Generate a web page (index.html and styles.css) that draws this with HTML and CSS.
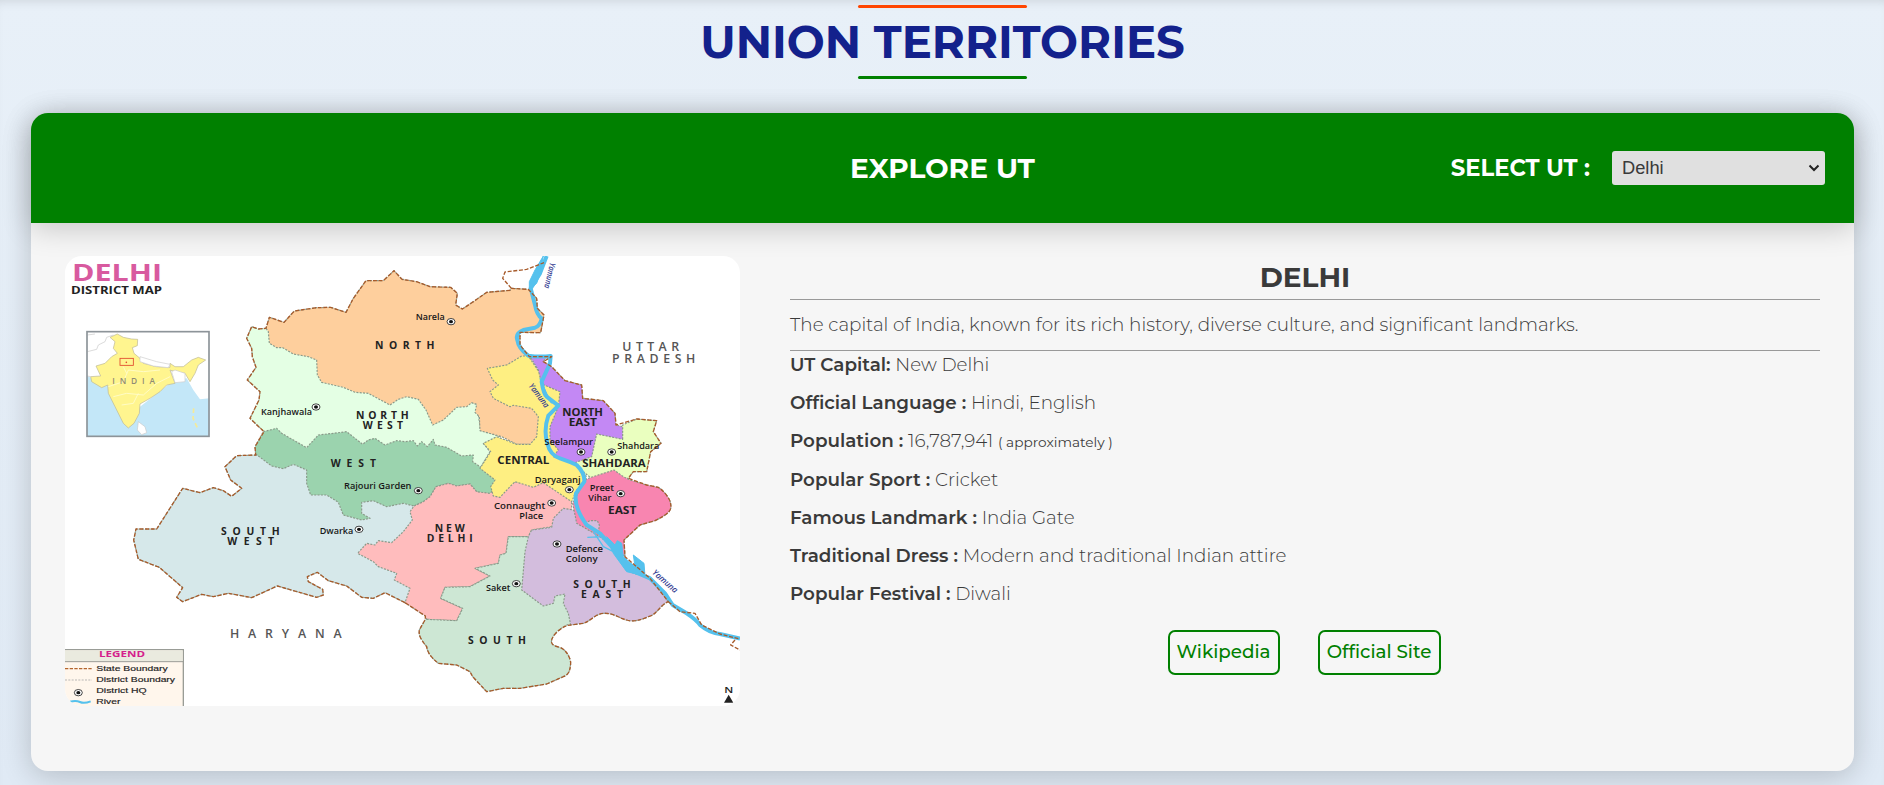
FILE: index.html
```
<!DOCTYPE html>
<html lang="en">
<head>
<meta charset="utf-8">
<title>Union Territories</title>
<link rel="stylesheet" href="styles.css">
</head>
<body>
<main class="page">
  <h1 class="title"><span class="title-text">UNION TERRITORIES</span></h1>
  <section class="card">
    <header class="card-head">
      <h2 class="explore">EXPLORE UT</h2>
      <div class="picker">
        <label class="picker-label" for="ut">SELECT UT :</label>
        <div class="select" id="ut"><span>Delhi</span>
          <svg class="chev" viewBox="0 0 12 8"><path d="M1.500 1.500 6 6l4.500-4.500" fill="none" stroke="#222" stroke-width="2"/></svg>
        </div>
      </div>
    </header>
    <div class="card-body">
      <svg class="map" viewBox="15 18 2025 1350" preserveAspectRatio="none">
        <rect x="15" y="18" width="2025" height="1350" fill="#fff"/>
        <!-- districts -->
        <g class="district">
          <path fill="#d6e8ea" d="M587 615 530 617 495 650 512 690 545 715 515 739 490 722 460 713 420 728 368 715 290 837 228 837 221 870 235 928 298 952 368 1013 350 1042 368 1055 425 1033 460 1040 505 1030 575 1043 652 1008 770 1042 790 1035 788 1018 745 995 742 980 772 967 805 992 860 1008 905 1042 940 1045 975 1028 1035 1058 1100 1000 1100 740 740 620Z"/>
          <path fill="#e4ffe4" d="M575 230 595 237 618 235 800 300 1250 463 1262 540 1320 560 1270 580 1290 605 1260 655 1000 680 740 620 612 545 570 505 597 450 600 425 562 390 588 352 577 320 575 295 560 265Z"/>
          <path fill="#fecf9d" d="M618 235 628 202 672 217 703 183 770 173 812 172 858 187 880 145 918 92 970 92 1002 62 1026 88 1070 95 1110 110 1172 112 1192 130 1187 165 1207 177 1240 155 1280 127 1350 121 1354 115 1405 118 1430 145 1432 175 1452 195 1442 248 1380 247 1380 285 1408 320 1470 480 1450 560 1420 583 1370 583 1325 560 1260 542 1258 500 1245 487 1250 463 1235 458 1220 470 1190 472 1150 510 1118 525 1098 480 1075 448 1040 440 1015 448 990 465 925 430 885 427 850 412 785 397 772 375 770 330 745 320 700 312 668 293 650 293 628 280 625 245Z"/>
          <path fill="#9bd3ae" d="M610 545 650 535 665 550 740 593 775 555 820 550 860 545 908 583 925 570 945 565 975 585 1010 572 1035 575 1060 572 1072 588 1085 575 1102 590 1120 568 1125 585 1160 592 1205 618 1240 615 1238 635 1275 660 1315 690 1300 740 1250 725 1230 702 1190 708 1165 700 1128 710 1110 740 1090 755 1062 768 1030 760 980 770 940 752 905 757 905 790 930 805 905 810 850 795 835 757 800 735 752 735 740 700 740 660 700 643 670 656 635 648 587 612 585 590Z"/>
          <path fill="#ffbcbd" d="M1062 768 1090 755 1110 740 1128 710 1165 700 1190 708 1230 702 1250 725 1290 730 1320 700 1450 690 1535 750 1535 785 1490 800 1475 830 1415 840 1405 860 1345 860 1338 910 1320 915 1315 940 1245 955 1290 978 1230 1010 1155 1012 1142 1045 1208 1075 1190 1112 1100 1108 1096 1098 1035 1058 1050 1015 1003 990 1010 970 955 950 940 935 893 910 920 880 945 885 955 872 995 878 1030 845 1057 810 1050 785Z"/>
          <path fill="#cde7d4" d="M1100 1108 1190 1112 1208 1075 1142 1045 1155 1012 1230 1010 1290 978 1245 955 1315 940 1320 915 1338 910 1345 860 1412 860 1540 900 1532 1122C1512 1125 1480 1150 1475 1170 1472 1182 1480 1188 1500 1192 1520 1200 1532 1225 1532 1240 1530 1265 1525 1275 1510 1280L1460 1302 1380 1315 1330 1315 1280 1325 1238 1280 1230 1265 1210 1255 1190 1245 1135 1240C1110 1220 1102 1205 1100 1190 1080 1165 1076 1155 1078 1140L1096 1108Z"/>
          <path fill="#d3bddd" d="M1415 840 1475 832 1480 805 1510 775 1540 780 1640 860 1720 970 1770 980 1825 1055C1800 1065 1790 1095 1765 1100 1740 1112 1715 1116 1700 1110 1680 1106 1660 1088 1630 1090 1605 1092 1590 1115 1570 1120L1532 1125 1525 1090 1510 1060 1515 1032 1485 1038 1480 1060 1450 1068 1385 1020 1395 905 1405 860Z"/>
          <path fill="#feef82" d="M1405 318 1385 318 1340 345 1282 355 1298 390 1315 405 1290 425 1300 445 1350 470 1360 466 1415 475 1435 500 1430 560 1410 583 1370 583 1310 560 1270 580 1292 605 1260 655 1305 690 1292 710 1300 738 1320 742 1350 710 1365 695 1420 712 1450 698 1535 755 1550 720 1580 685 1560 630 1500 560 1510 430 1440 370Z"/>
          <path fill="#c388f4" d="M1410 320 1460 320 1450 335 1475 350 1515 392 1565 405 1568 445 1630 452 1665 490 1668 525 1688 530 1690 570 1640 640 1540 640 1480 620 1495 600 1470 570 1470 530 1495 470 1500 425 1445 402 1435 360Z"/>
          <path fill="#eaffbf" d="M1688 568 1688 525 1730 507 1790 512 1780 545 1803 580 1772 605 1760 665 1720 665 1705 685 1600 690 1540 640 1595 620 1610 552 1650 560Z"/>
          <path fill="#f885b0" d="M1575 690 1590 683 1662 660 1690 680 1710 690 1760 705 1795 712C1815 725 1832 750 1832 762 1835 780 1830 790 1785 812L1740 825 1692 870 1695 920 1620 860 1550 820 1538 760Z"/>
          <path fill="#d3bddd" d="M1575 820 1590 812 1612 812 1618 825 1615 850Z"/>
        </g>
        <!-- river -->
        <g class="river">
          <path stroke-width="12" d="M1460 18 1440 70 1412 115 1425 165Q1430 195 1445 205 1440 228 1425 233L1390 240Q1365 250 1372 270 1375 295 1405 317 1440 322 1472 318L1470 340 1445 395Q1450 430 1460 440L1495 467 1465 497Q1450 540 1462 580 1470 615 1500 625 1530 635 1550 645 1575 670 1573 695L1548 730Q1540 770 1580 825L1620 850 1655 890 1700 955 1770 985 1815 1030 1838 1065 1880 1090Q1910 1110 1920 1125 1950 1150 1980 1152L2040 1166"/>
          <path stroke-width="3" d="M1450 18 1425 60 1408 95 1408 118 1430 100 1440 70ZM1640 860 1665 885 1672 872 1685 880 1690 920 1725 950 1720 915 1752 940 1755 978 1700 965 1660 910ZM1440 385 1450 430 1475 460 1460 430Z"/>
          <path stroke-width="4" d="M1582 862 1630 860M1600 845 1630 890 1660 905"/>
        </g>
        <!-- state border -->
        <g class="border">
          <path d="M1035 1058 975 1028 940 1045 905 1042 860 1008 805 992 772 967 742 980 745 995 788 1018 790 1035 770 1042 652 1008 575 1043 505 1030 460 1040 425 1033 368 1055 350 1042 368 1013 298 952 235 928 221 870 228 837 290 837 368 715 420 728 460 713 490 722 515 739 545 715 512 690 495 650 530 617 587 615 585 590 612 545 570 505 597 450 600 425 562 390 588 352 577 320 575 295 560 265 575 230 595 237 618 235 628 202 672 217 703 183 770 173 812 172 858 187 880 145 918 92 970 92 1002 62 1026 88 1070 95 1110 110 1172 112 1192 130 1187 165 1207 177 1240 155 1280 127 1350 121 1354 115 1405 118 1430 145 1432 175 1452 195 1442 248 1380 247 1380 285 1408 320 1475 320 1450 335 1475 350 1515 392 1565 405 1568 445 1630 452 1665 490 1668 525 1730 507 1790 512 1780 545 1803 580 1772 605 1760 665 1720 665 1705 685 1760 705 1795 712C1815 725 1832 750 1832 762 1835 780 1830 790 1785 812L1740 825 1692 870 1695 920 1770 985 1825 1055C1800 1065 1790 1095 1765 1100 1740 1112 1715 1116 1700 1110 1680 1106 1660 1088 1630 1090 1605 1092 1590 1115 1570 1120L1532 1125C1512 1125 1480 1150 1475 1170 1472 1182 1480 1188 1500 1192 1520 1200 1532 1225 1532 1240 1530 1265 1525 1275 1510 1280L1460 1302 1380 1315 1330 1315 1280 1325 1238 1280 1230 1265 1210 1255 1190 1245 1135 1240C1110 1220 1102 1205 1100 1190 1080 1165 1076 1155 1078 1140L1096 1108 1096 1098Z"/>
          <path d="M1354 115 1328 85 1335 66 1400 58 1452 38M1825 1055 1860 1085 1905 1090 1925 1125 1980 1152 2035 1166M2025 1170 2012 1185 2040 1200"/>
        </g>
        <!-- district headquarters -->
        <defs><g id="hq"><ellipse rx="12" ry="9.500" fill="#fff" stroke="#222" stroke-width="2.500"/><ellipse rx="6" ry="5" fill="#111"/></g></defs>
        <use href="#hq" x="768" y="471"/><use href="#hq" x="1173" y="215"/><use href="#hq" x="1563" y="606"/><use href="#hq" x="1655" y="606"/><use href="#hq" x="1075" y="722"/><use href="#hq" x="1528" y="719"/><use href="#hq" x="1682" y="731"/><use href="#hq" x="1475" y="759"/><use href="#hq" x="897" y="838"/><use href="#hq" x="1491" y="882"/><use href="#hq" x="1369" y="1001"/>
        <g class="place">
          <text x="603" y="494" textLength="153" lengthAdjust="spacingAndGlyphs">Kanjhawala</text><text x="1067" y="209" textLength="87" lengthAdjust="spacingAndGlyphs">Narela</text>
          <text x="1453" y="585" textLength="146" lengthAdjust="spacingAndGlyphs">Seelampur</text><text x="1672" y="597" textLength="126" lengthAdjust="spacingAndGlyphs">Shahdara</text>
          <text x="852" y="716" textLength="202" lengthAdjust="spacingAndGlyphs">Rajouri Garden</text><text x="1424" y="698" textLength="138" lengthAdjust="spacingAndGlyphs">Daryaganj</text>
          <text x="1589" y="723" textLength="73" lengthAdjust="spacingAndGlyphs">Preet</text><text x="1585" y="752" textLength="69" lengthAdjust="spacingAndGlyphs">Vihar</text>
          <text x="1302" y="776" textLength="154" lengthAdjust="spacingAndGlyphs">Connaught</text><text x="1378" y="806" textLength="71" lengthAdjust="spacingAndGlyphs">Place</text>
          <text x="779" y="853" textLength="101" lengthAdjust="spacingAndGlyphs">Dwarka</text><text x="1517" y="905" textLength="112" lengthAdjust="spacingAndGlyphs">Defence</text>
          <text x="1517" y="935" textLength="96" lengthAdjust="spacingAndGlyphs">Colony</text><text x="1278" y="1022" textLength="73" lengthAdjust="spacingAndGlyphs">Saket</text>
        </g>
        <g class="region">
          <text x="945" y="298" textLength="178">NORTH</text><text x="888" y="507" textLength="158">NORTH</text><text x="908" y="537" textLength="121">WEST</text>
          <text x="812" y="652" textLength="136">WEST</text><text x="483" y="855" textLength="176">SOUTH</text><text x="502" y="885" textLength="140">WEST</text>
          <text x="1124" y="846" textLength="90">NEW</text><text x="1100" y="876" textLength="138">DELHI</text>
          <text x="1540" y="1015" textLength="172">SOUTH</text><text x="1563" y="1045" textLength="126">EAST</text><text x="1224" y="1182" textLength="174">SOUTH</text>
          <text x="1507" y="498" textLength="122" lengthAdjust="spacingAndGlyphs">NORTH</text><text x="1526" y="528" textLength="85" lengthAdjust="spacingAndGlyphs">EAST</text>
          <text x="1312" y="641" textLength="156" lengthAdjust="spacingAndGlyphs">CENTRAL</text><text x="1567" y="650" textLength="190" lengthAdjust="spacingAndGlyphs">SHAHDARA</text><text x="1644" y="793" textLength="85" lengthAdjust="spacingAndGlyphs">EAST</text>
        </g>
        <g class="state">
          <text x="1687" y="302" textLength="170">UTTAR</text><text x="1656" y="339" textLength="250">PRADESH</text><text x="510" y="1163" textLength="335">HARYANA</text>
        </g>
        <g class="water">
          <text textLength="78" lengthAdjust="spacingAndGlyphs" transform="translate(1470 37) rotate(103)">Yamuna</text>
          <text textLength="84" lengthAdjust="spacingAndGlyphs" transform="translate(1405 408) rotate(53)">Yamuna</text>
          <text textLength="92" lengthAdjust="spacingAndGlyphs" transform="translate(1775 970) rotate(41)">Yamuna</text>
        </g>
        <text class="map-title" x="36" y="92" textLength="270" lengthAdjust="spacingAndGlyphs">DELHI</text>
        <text class="map-sub" x="33" y="131" textLength="273" lengthAdjust="spacingAndGlyphs">DISTRICT MAP</text>
        <!-- inset of India -->
        <svg x="80" y="244" width="369" height="316" viewBox="80 244 369 316">
          <rect x="80" y="244" width="369" height="316" fill="#fff"/>
          <path fill="#c3e7f8" d="M80 378 150 405 240 470 330 400 345 390 380 385 400 420 420 448 449 445V560H80Z"/>
          <path fill="#fff58f" stroke="#bbb796" stroke-width="2" d="M150 262 172 252 190 262 215 267 233 268 232 287 217 293 222 310 240 325 250 340 290 350 330 352 330 340 345 350 370 350 395 330 415 322 437 330 415 345 405 370 390 395 375 370 345 365 330 360 345 400 320 405 300 425 270 445 240 462 238 490 222 520 205 534 190 520 165 470 145 430 143 405 125 413 95 395 92 380 122 378 108 348 135 340 155 320 172 310 160 295 165 275Z"/>
          <path fill="#fff" stroke="#ccc" stroke-width="2" d="M240 320 290 335 330 343 325 353 280 348 240 335ZM335 365 345 360 375 370 375 395 345 398ZM235 515 255 530 260 548 245 554 232 540Z"/>
          <path fill="none" stroke="#fffcd0" stroke-width="2.500" d="M145 410 190 395 205 360 250 365 300 360M160 440 200 430 250 435 290 400 330 380M185 465 220 460 235 430M190 350 200 370"/>
          <path fill="none" stroke="#c8c8c8" stroke-width="2" d="M82 305 110 298 115 285 135 275 140 262 160 255M82 378 92 380M82 255 105 252"/>
          <path fill="none" stroke="#f5ea98" stroke-width="5" stroke-dasharray="14 9" d="M401 475 399 505 415 540"/>
          <rect x="180" y="325" width="40" height="21" fill="none" stroke="#e0442b" stroke-width="2.500"/><circle cx="199" cy="337" r="2.500" fill="#e0442b"/>
          <text class="india" x="157" y="401" textLength="128">INDIA</text>
        </svg>
        <rect x="81" y="245" width="366" height="314" fill="none" stroke="#8d9499" stroke-width="5"/>
        <!-- legend -->
        <rect x="-10" y="1199" width="380" height="190" fill="#fff6ec" stroke="#999c96" stroke-width="4"/>
        <path d="M15 1201H368V1234H15Z" fill="#eaeadf"/><path d="M15 1235H370" stroke="#999c96" stroke-width="3"/>
        <text class="legend-title" x="117" y="1222" textLength="138" lengthAdjust="spacingAndGlyphs">LEGEND</text>
        <path d="M15 1256H96" stroke="#b4642c" stroke-width="3.500" stroke-dasharray="10 4"/>
        <path d="M15 1290H96" stroke="#aaa" stroke-width="2.500" stroke-dasharray="6 4"/>
        <use href="#hq" x="55" y="1328"/>
        <path d="M30 1355Q48 1350 60 1356T92 1354" fill="none" stroke="#55c1ed" stroke-width="6"/>
        <g class="legend"><text x="109" y="1262" textLength="214" lengthAdjust="spacingAndGlyphs">State Boundary</text><text x="109" y="1296" textLength="236" lengthAdjust="spacingAndGlyphs">District Boundary</text><text x="109" y="1330" textLength="151" lengthAdjust="spacingAndGlyphs">District HQ</text><text x="109" y="1361" textLength="72" lengthAdjust="spacingAndGlyphs">River</text></g>
        <text class="north" x="1993" y="1328" textLength="27" lengthAdjust="spacingAndGlyphs">N</text><path d="M1992 1358 2006 1334 2020 1358Z" fill="#222"/>
      </svg>
      <article class="info">
        <h2 class="name">DELHI</h2>
        <p class="desc">The capital of India, known for its rich history, diverse culture, and significant landmarks.</p>
        <p class="row"><b>UT Capital:</b> <span>New Delhi</span></p>
        <p class="row"><b>Official Language :</b> <span>Hindi, English</span></p>
        <p class="row"><b>Population :</b> <span>16,787,941</span> <small>( approximately )</small></p>
        <p class="row"><b>Popular Sport :</b> <span>Cricket</span></p>
        <p class="row"><b>Famous Landmark :</b> <span>India Gate</span></p>
        <p class="row"><b>Traditional Dress :</b> <span>Modern and traditional Indian attire</span></p>
        <p class="row"><b>Popular Festival :</b> <span>Diwali</span></p>
        <nav class="links"><a class="btn wiki">Wikipedia</a><a class="btn site">Official Site</a></nav>
      </article>
    </div>
  </section>
</main>
</body>
</html>
```
FILE: styles.css
```
* { box-sizing: border-box; margin: 0; }
body { height: 785px; overflow: hidden; background: linear-gradient(#e8f0f8, #e0eaf5); color: #3a3a3a; font-family: Montserrat, Inter, sans-serif; }
.page { height: 785px; padding: 5px 30px 0 31px; box-shadow: inset 0 8px 12px -8px rgba(0,0,0,.14); }
.title { width: 169px; height: 74px; margin: 0 auto 34px; position: relative; border-radius: 2px; display: flex; justify-content: center; align-items: center; font-size: 45px; line-height: 68px; font-weight: 700; color: #13218c; white-space: nowrap; }
.title::before, .title::after { content: ""; position: absolute; left: 0; width: 169px; height: 3px; border-radius: 2px; background: #ff4500; top: 0; }
.title::after { top: 71px; background: green; }
.card { height: 658px; border-radius: 17px; background: #f6f6f6; box-shadow: 0 5px 30px rgba(0,0,0,.2); }
.card-head { height: 110px; border-radius: 17px 17px 0 0; background: green; color: #fff; display: grid; grid-template-columns: 1fr auto 1fr; align-items: center; padding: 0 29px 1px; box-shadow: 0 5px 30px rgba(0,0,0,.2); }
.explore { grid-column: 2; font-size: 28px; font-weight: 700; white-space: nowrap; }
.picker { display: flex; justify-content: flex-end; align-items: center; gap: 22px; }
.picker-label { font-size: 22.700px; font-weight: 700; white-space: nowrap; }
.select { width: 213px; height: 34px; border-radius: 3px; background: #e0e0e0; color: #3a3a3a; font: 18.300px/34px "Liberation Sans", Arial, sans-serif; display: flex; justify-content: space-between; align-items: center; padding: 0 5px 0 10px; }
.chev { width: 12px; height: 8px; }
.card-body { display: flex; padding: 33px 34px 0; gap: 50px; }
.map { width: 675px; height: 450px; border-radius: 17px; flex: none; font-family: "Open Sans", "Noto Sans", sans-serif; }
.district path { stroke: #8a9a8a; stroke-width: 3.500; stroke-dasharray: 6 4; stroke-linejoin: round; }
.river path { stroke: #55c1ed; fill: none; stroke-linejoin: round; }
.river path:nth-child(2) { fill: #55c1ed; }
.border path { fill: none; stroke: #a75b2b; stroke-width: 4; stroke-dasharray: 12 5; stroke-linejoin: round; }
.place { font-size: 24px; font-weight: 600; fill: #181818; }
.region { font-size: 31px; font-weight: 700; fill: #222; }
.state { font-size: 37px; font-weight: 600; fill: #555; }
.water { font-size: 25px; font-style: italic; font-weight: 600; fill: #343c91; }
.map-title { font-size: 70px; font-weight: 700; fill: #d85a9f; }
.map-sub { font-size: 31px; font-weight: 700; fill: #222; }
.india { font-size: 25px; font-weight: 600; fill: #8f8b75; }
.legend-title { font-size: 27px; font-weight: 700; fill: #d5208c; }
.legend { font: 24px "Liberation Sans", sans-serif; fill: #222; stroke: #222; stroke-width: .5; }
.north { font-size: 29px; font-weight: 600; fill: #222; }
.info { flex: 1; padding-top: 5px; }
.name { height: 39px; line-height: 32px; font-size: 28px; text-align: center; border-bottom: 1px solid #999; }
.desc { height: 51px; line-height: 50px; font-size: 18.320px; font-weight: 300; border-bottom: 1px solid #999; white-space: nowrap; }
.row { height: 38.200px; line-height: 28px; font-size: 18.320px; font-weight: 300; white-space: nowrap; }
.row b { font-weight: 600; }
.row small { font-size: 13.700px; font-weight: 400; }
.links { display: flex; justify-content: center; gap: 38px; padding: 11.600px 2px 0 0; }
.btn { height: 45px; border: 2px solid green; border-radius: 7px; color: green; font-size: 18.320px; font-weight: 500; line-height: 40px; text-align: center; white-space: nowrap; }
.wiki { width: 112px; }
.site { width: 123px; }
```
